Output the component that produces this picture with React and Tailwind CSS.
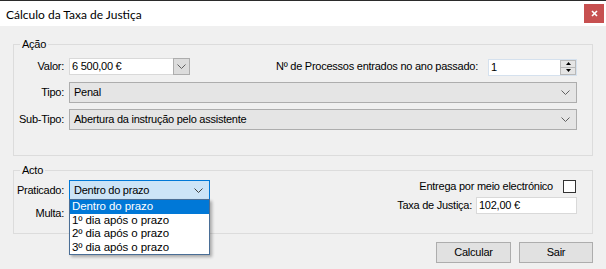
import React from "react";

function Chevron({ color = "#606060" }) {
  return (
    <svg width="9" height="5" viewBox="0 0 9 5" className="block">
      <polyline points="0.5,0.5 4.5,4.5 8.5,0.5" fill="none" stroke={color} strokeWidth="1" />
    </svg>
  );
}

function Label({ children }) {
  return <span className="w-[51px] shrink-0 text-right pr-[1px]">{children}</span>;
}

function Combo({ value }) {
  return (
    <div className="ml-[4px] flex-1 h-[21px] bg-[#e5e5e5] border border-[#adadad] flex items-center justify-between pl-[4px] pr-[6px]">
      <span>{value}</span>
      <Chevron />
    </div>
  );
}

export default function App() {
  return (
    <div className="w-[606px] h-[269px] bg-[#f0f0f0] overflow-hidden flex flex-col font-['Liberation_Sans',Arial,sans-serif] text-[11px] leading-[13px] tracking-[-0.25px] text-black">
      {/* Title bar */}
      <div className="h-[26px] shrink-0 bg-white border-t border-[#2b2b2b] flex items-start justify-between">
        <span className="pl-[6px] pt-[6px] font-['Lato',sans-serif] text-[12px] leading-[15px] tracking-normal text-black">
          Cálculo da Taxa de Justiça
        </span>
        <div className="mt-[3px] mr-[2px] w-[20px] h-[19px] bg-[#c75050] flex items-center justify-center">
          <svg width="7" height="7" viewBox="0 0 7 7" className="block">
            <line x1="1" y1="1" x2="6" y2="6" stroke="white" strokeWidth="1.6" />
            <line x1="6" y1="1" x2="1" y2="6" stroke="white" strokeWidth="1.6" />
          </svg>
        </div>
      </div>

      {/* Ação group */}
      <fieldset className="mt-[12px] mx-[13px] border border-[#dcdcdc] pt-[7px] pb-[25px] pr-[15px] min-w-0">
        <legend className="ml-[6px] px-[2px] leading-[13px]">Ação</legend>
        <div className="flex items-start h-[17px]">
          <div className="flex items-center h-[17px]">
            <Label>Valor:</Label>
          </div>
          <div className="ml-[4px] w-[121px] h-[17px] bg-white border border-[#d9d9d9] flex">
            <span className="flex-1 pl-[2px] leading-[15px]">6 500,00 €</span>
            <div className="w-[17px] -my-[1px] -mr-[1px] bg-[#dcdcdc] border border-[#adadad] flex items-center justify-center">
              <Chevron />
            </div>
          </div>
          <div className="ml-auto flex items-center h-[17px]">
            <span>Nº de Processos entrados no ano passado:</span>
            <div className="ml-[10px] mt-[1px] w-[89px] h-[17px] bg-white border border-[#d5e1ee] flex">
              <span className="flex-1 pl-[2px] leading-[15px]">1</span>
              <div className="w-[16px] flex flex-col">
                <div className="flex-1 bg-[#e5e5e5] border border-[#b9b9b9] flex items-center justify-center">
                  <svg width="5" height="3" viewBox="0 0 5 3" className="block">
                    <polygon points="0,3 2.5,0 5,3" fill="#000" />
                  </svg>
                </div>
                <div className="flex-1 bg-[#e5e5e5] border border-t-0 border-[#b9b9b9] flex items-center justify-center">
                  <svg width="5" height="3" viewBox="0 0 5 3" className="block">
                    <polygon points="0,0 5,0 2.5,3" fill="#000" />
                  </svg>
                </div>
              </div>
            </div>
          </div>
        </div>
        <div className="flex items-center mt-[7px]">
          <Label>Tipo:</Label>
          <Combo value="Penal" />
        </div>
        <div className="flex items-center mt-[6px]">
          <Label>Sub-Tipo:</Label>
          <Combo value="Abertura da instrução pelo assistente" />
        </div>
      </fieldset>

      {/* Acto group */}
      <fieldset className="mt-[8px] mx-[13px] border border-[#dcdcdc] pt-[3px] pb-[10px] pr-[15px] min-w-0">
        <legend className="ml-[6px] px-[2px] leading-[13px]">Acto</legend>
        <div className="flex items-start">
          <div className="flex flex-col">
            <div className="flex items-center">
              <Label>Praticado:</Label>
              <div className="ml-[4px] w-[141px] h-[20px] bg-[#cce4f7] border border-[#0078d7] flex items-center justify-between pl-[4px] pr-[6px] relative">
                <span>Dentro do prazo</span>
                <Chevron color="#404040" />
                <div className="absolute left-[-1px] top-full w-[141px] bg-white border border-[#4a6e96] shadow-[2px_2px_3px_rgba(0,0,0,0.3)] z-10 text-[11.5px] leading-[13.5px] tracking-[-0.1px]">
                  <div className="bg-[#0078d7] text-white pl-[2px]">Dentro do prazo</div>
                  <div className="pl-[2px]">1º dia após o prazo</div>
                  <div className="pl-[2px]">2º dia após o prazo</div>
                  <div className="pl-[2px]">3º dia após o prazo</div>
                </div>
              </div>
            </div>
            <div className="flex items-center mt-[3px]">
              <Label>Multa:</Label>
              <div className="ml-[4px] w-[100px] h-[20px] bg-white border border-[#d9d9d9]" />
            </div>
          </div>
          <div className="ml-auto flex flex-col items-end">
            <div className="flex items-center h-[13px]">
              <span>Entrega por meio electrónico</span>
              <div className="ml-[10px] mr-[1px] w-[13px] h-[13px] bg-white border border-[#333333]" />
            </div>
            <div className="flex items-center mt-[4px]">
              <span>Taxa de Justiça:</span>
              <div className="ml-[4px] w-[101px] h-[17px] bg-white border border-[#d9d9d9] flex items-center pl-[2px]">
                102,00 €
              </div>
            </div>
          </div>
        </div>
      </fieldset>

      {/* Buttons */}
      <div className="mt-[8px] mr-[13px] flex justify-end gap-[8px]">
        <button className="w-[75px] h-[21px] bg-[#e1e1e1] border border-[#adadad] flex items-center justify-center">
          Calcular
        </button>
        <button className="w-[74px] h-[21px] bg-[#e1e1e1] border border-[#adadad] flex items-center justify-center">
          Sair
        </button>
      </div>
    </div>
  );
}
